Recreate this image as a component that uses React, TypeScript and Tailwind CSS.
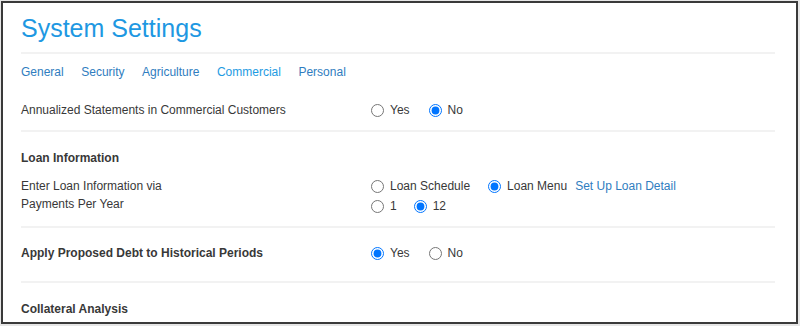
import React from "react";

function Radio({ checked, label, className = "", name }: { checked?: boolean; label: string; className?: string; name: string }) {
  return (
    <label className={`flex items-center ${className}`}>
      <input type="radio" name={name} defaultChecked={checked} className="w-[13px] h-[13px] m-0" />
      <span className="ml-[6px]">{label}</span>
    </label>
  );
}

function Line() {
  return <div className="h-[2px] bg-[#f2f2f2] w-[754px]" />;
}

export default function App() {
  const font = { fontFamily: '"Liberation Sans", Arial, sans-serif' };
  return (
    <div className="w-[800px] h-[326px] bg-[#e6e6e6] pt-[1px] pl-[1px]" style={font}>
      <div className="w-[797px] h-[323px] border-2 border-[#3a3a3a] bg-white pl-[18px] pt-[11px] text-[12px] leading-[16px] text-[#383838] overflow-hidden">
        <h1 className="text-[25px] leading-[28px] text-[#1e98e2] font-normal">System Settings</h1>
        <div className="mt-[10px]"><Line /></div>
        <div className="mt-[10px] flex gap-[17.5px] text-[#2f7dc0]">
          <span>General</span>
          <span>Security</span>
          <span>Agriculture</span>
          <span className="text-[#1e9be2]">Commercial</span>
          <span>Personal</span>
        </div>
        <div className="mt-[22px] flex items-center h-[16px]">
          <div className="w-[350px]">Annualized Statements in Commercial Customers</div>
          <Radio name="a" label="Yes" className="mr-[19px]" />
          <Radio name="a" label="No" checked />
        </div>
        <div className="mt-[12px]"><Line /></div>
        <div className="mt-[18px] font-bold">Loan Information</div>
        <div className="mt-[10px] flex">
          <div className="w-[350px] pt-[1px] leading-[18px]">
            <div>Enter Loan Information via</div>
            <div>Payments Per Year</div>
          </div>
          <div>
            <div className="flex items-center h-[20px]">
              <Radio name="b" label="Loan Schedule" className="mr-[18px]" />
              <Radio name="b" label="Loan Menu" checked />
              <span className="ml-[8px] text-[#2f7dc0]">Set Up Loan Detail</span>
            </div>
            <div className="flex items-center h-[20px]">
              <Radio name="c" label="1" className="mr-[17px]" />
              <Radio name="c" label="12" checked />
            </div>
          </div>
        </div>
        <div className="mt-[10px]"><Line /></div>
        <div className="mt-[17px] flex items-center h-[16px]">
          <div className="w-[350px] font-bold">Apply Proposed Debt to Historical Periods</div>
          <Radio name="d" label="Yes" checked className="mr-[19px]" />
          <Radio name="d" label="No" />
        </div>
        <div className="mt-[20px]"><Line /></div>
        <div className="mt-[18px] font-bold">Collateral Analysis</div>
      </div>
    </div>
  );
}
